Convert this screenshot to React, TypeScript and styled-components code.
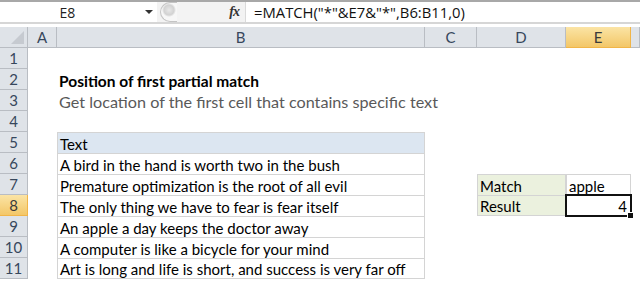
import styled, { createGlobalStyle } from 'styled-components';

const GlobalStyle = createGlobalStyle`
  html, body {
    margin: 0;
    padding: 0;
    background: #ffffff;
  }
`;

const COLS = [28, 29, 368, 52, 89, 65, 9];
const CELL_FONT = `Lato, 'Liberation Sans', sans-serif`;

const Sheet = styled.div`
  width: 640px;
  height: 282px;
  overflow: hidden;
  background: #ffffff;
  display: flex;
  flex-direction: column;
`;

const TopEdge = styled.div`
  height: 2px;
  background: #a8a8a8;
`;

const FormulaBar = styled.div`
  height: 20px;
  display: flex;
  align-items: stretch;
  background: #ffffff;
`;

const NameBox = styled.div`
  width: 157px;
  position: relative;
  display: flex;
  align-items: center;
  justify-content: center;
  font-family: 'Open Sans', sans-serif;
  font-size: 14px;
  color: #222;
  padding-right: 22px;
  box-sizing: border-box;
`;

const DropArrow = styled.span`
  position: absolute;
  right: 4px;
  top: 8px;
  width: 0;
  height: 0;
  border-left: 4px solid transparent;
  border-right: 4px solid transparent;
  border-top: 4px solid #333;
`;

const Splitter = styled.div`
  width: 88px;
  display: flex;
  align-items: center;
  justify-content: space-between;
  background: #f3f3f3;
  padding: 0 6px 0 3px;
  box-sizing: border-box;
`;

const Grip = styled.div`
  width: 16px;
  height: 18px;
  border-radius: 10px 0 0 10px;
  border: 1px solid #c4c4c4;
  border-right: none;
  background: radial-gradient(circle at 8px 7px, #e8e8e8 0, #d2d2d2 5px, #f7f7f7 7px);
`;

const Fx = styled.span`
  font-family: 'Liberation Serif', serif;
  font-style: italic;
  font-weight: bold;
  font-size: 14px;
  color: #333;
  letter-spacing: -1px;
`;

const FormulaInput = styled.div`
  flex: 1;
  display: flex;
  align-items: center;
  padding-left: 8px;
  font-family: 'Open Sans', sans-serif;
  font-size: 14.8px;
  color: #111;
  border-left: 1px solid #dadada;
`;

const BarRule = styled.div`
  height: 2px;
  background: #d6d6d6;
`;

const BarGap = styled.div`
  height: 3px;
  background: #ffffff;
`;

const Grid = styled.div`
  display: grid;
  grid-template-columns: ${COLS.map((c) => `${c}px`).join(' ')};
  grid-auto-rows: 21px;
`;

const HeaderCell = styled.div<{ $active?: boolean }>`
  box-sizing: border-box;
  display: flex;
  align-items: center;
  justify-content: center;
  font-family: ${CELL_FONT};
  font-size: 15px;
  color: ${({ $active }) => ($active ? '#3b3b3b' : '#37475c')};
  background: ${({ $active }) =>
    $active ? 'linear-gradient(#fbe4a5, #f3c768)' : '#dfe3e8'};
  border-right: 1px solid ${({ $active }) => ($active ? '#f1b548' : '#b9bdc3')};
  border-bottom: 1px solid ${({ $active }) => ($active ? '#f1b548' : '#b9bdc3')};
`;

const Corner = styled.div`
  box-sizing: border-box;
  background: #dfe3e8;
  border-right: 1px solid #b9bdc3;
  border-bottom: 1px solid #b9bdc3;
  position: relative;
  &::after {
    content: '';
    position: absolute;
    right: 3px;
    bottom: 3px;
    width: 0;
    height: 0;
    border-left: 13px solid transparent;
    border-bottom: 13px solid #c6cad0;
  }
`;

type Tone = 'plain' | 'head' | 'label' | 'sub' | 'title';

const TONE_BG: Record<Tone, string> = {
  plain: 'transparent',
  head: '#dce6f1',
  label: '#ebf1de',
  sub: 'transparent',
  title: 'transparent',
};

const Cell = styled.div<{
  $tone?: Tone;
  $boxed?: boolean;
  $last?: boolean;
  $right?: boolean;
  $selected?: boolean;
}>`
  box-sizing: border-box;
  position: relative;
  display: flex;
  align-items: flex-end;
  justify-content: ${({ $right }) => ($right ? 'flex-end' : 'flex-start')};
  padding: 0 3px 0 2px;
  white-space: nowrap;
  overflow: visible;
  font-family: ${CELL_FONT};
  font-size: ${({ $tone }) => ($tone === 'sub' ? '16.2px' : $tone === 'title' ? '15.5px' : '15px')};
  line-height: 18px;
  font-weight: ${({ $tone }) => ($tone === 'title' ? 700 : 400)};
  color: ${({ $tone }) => ($tone === 'sub' ? '#595959' : '#000')};
  background: ${({ $tone = 'plain' }) => TONE_BG[$tone]};
  ${({ $boxed, $last }) =>
    $boxed &&
    `
    border-top: 1px solid #d4d4d4;
    border-left: 1px solid #d4d4d4;
    border-right: 1px solid #d4d4d4;
    ${$last ? 'border-bottom: 1px solid #d4d4d4;' : ''}
  `}
  ${({ $selected }) =>
    $selected &&
    `
    outline: 2px solid #111;
    outline-offset: -1px;
    z-index: 2;
  `}
`;

const FillHandle = styled.span`
  position: absolute;
  right: -4px;
  bottom: -4px;
  width: 5px;
  height: 5px;
  background: #111;
  border: 1px solid #fff;
`;

type CellSpec = {
  text?: string;
  tone?: Tone;
  boxed?: boolean;
  last?: boolean;
  right?: boolean;
  selected?: boolean;
};

const quotes = [
  'A bird in the hand is worth two in the bush',
  'Premature optimization is the root of all evil',
  'The only thing we have to fear is fear itself',
  'An apple a day keeps the doctor away',
  'A computer is like a bicycle for your mind',
  'Art is long and life is short, and success is very far off',
];

const rows: Record<number, Record<string, CellSpec>> = {
  2: { B: { text: 'Position of first partial match', tone: 'title' } },
  3: { B: { text: 'Get location of the first cell that contains specific text', tone: 'sub' } },
  5: { B: { text: 'Text', tone: 'head', boxed: true } },
  7: {
    D: { text: 'Match', tone: 'label', boxed: true },
    E: { text: 'apple', boxed: true },
  },
  8: {
    D: { text: 'Result', tone: 'label', boxed: true, last: true },
    E: { text: '4', boxed: true, last: true, right: true, selected: true },
  },
};

quotes.forEach((q, i) => {
  const r = 6 + i;
  rows[r] = { ...(rows[r] || {}), B: { text: q, boxed: true, last: r === 11 } };
});

const LETTERS = ['A', 'B', 'C', 'D', 'E', 'F'];

export default function App() {
  return (
    <Sheet>
      <GlobalStyle />
      <TopEdge />
      <FormulaBar>
        <NameBox>
          E8
          <DropArrow />
        </NameBox>
        <Splitter>
          <Grip />
          <Fx>fx</Fx>
        </Splitter>
        <FormulaInput>=MATCH("*"&amp;E7&amp;"*",B6:B11,0)</FormulaInput>
      </FormulaBar>
      <BarRule />
      <BarGap />
      <Grid>
        <Corner />
        {LETTERS.map((l) => (
          <HeaderCell key={l} $active={l === 'E'}>
            {l === 'F' ? '' : l}
          </HeaderCell>
        ))}
        {Array.from({ length: 11 }, (_, i) => i + 1).map((r) => (
          <RowFragment key={r} row={r} specs={rows[r] || {}} />
        ))}
      </Grid>
    </Sheet>
  );
}

function RowFragment({ row, specs }: { row: number; specs: Record<string, CellSpec> }) {
  return (
    <>
      <HeaderCell $active={row === 8}>{row}</HeaderCell>
      {LETTERS.map((l) => {
        const s = specs[l];
        if (!s) return <Cell key={l} />;
        return (
          <Cell
            key={l}
            $tone={s.tone}
            $boxed={s.boxed}
            $last={s.last}
            $right={s.right}
            $selected={s.selected}
          >
            {s.text}
            {s.selected && <FillHandle />}
          </Cell>
        );
      })}
    </>
  );
}
